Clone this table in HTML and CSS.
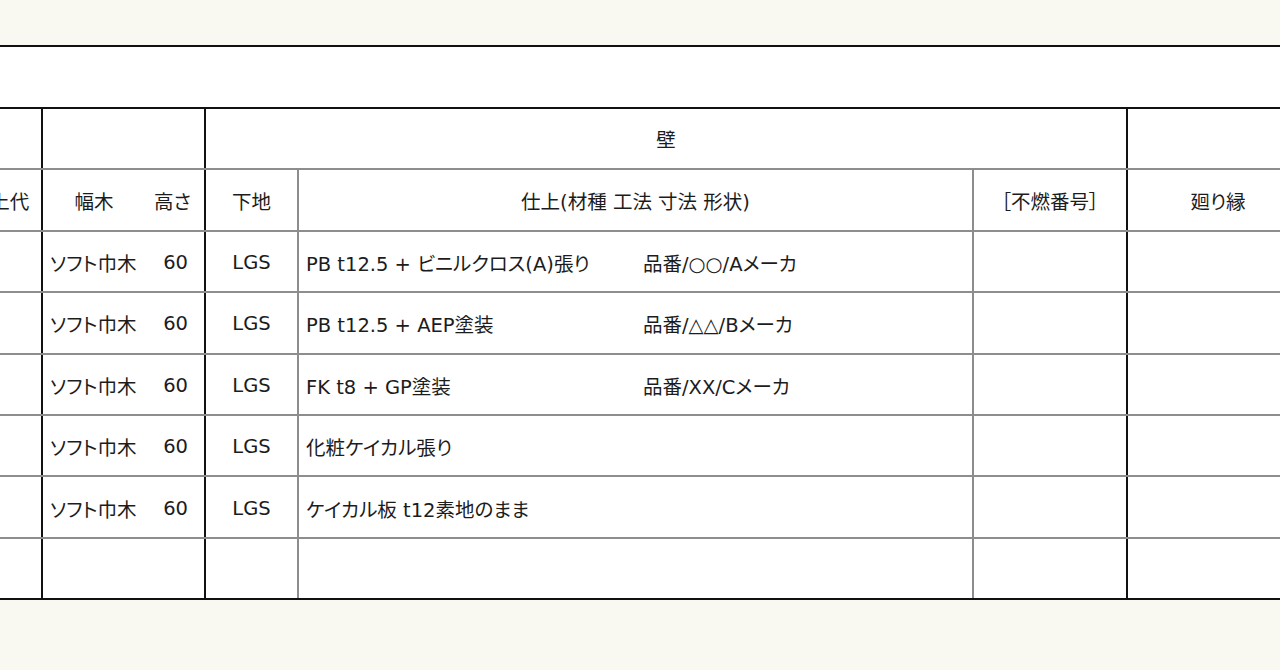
FILE: index.html
```html
<!DOCTYPE html>
<html lang="ja">
<head>
<meta charset="utf-8">
<title>仕上表</title>
<link rel="stylesheet" href="styles.css">
</head>
<body>
<div class="sheet">
  <div class="band"></div>
  <table class="schedule">
    <colgroup>
      <col class="c-allow">
      <col class="c-base">
      <col class="c-height">
      <col class="c-sub">
      <col class="c-finish">
      <col class="c-fire">
      <col class="c-cornice">
    </colgroup>
    <thead>
      <tr class="h1">
        <th class="thick-r"></th>
        <th colspan="2" class="thick-r"></th>
        <th colspan="3" class="thick-r">壁</th>
        <th></th>
      </tr>
      <tr class="h2">
        <th class="thick-r">仕上代</th>
        <th class="join-r">幅木</th>
        <th class="thick-r hgt">高さ</th>
        <th>下地</th>
        <th>仕上(材種 工法 寸法 形状)</th>
        <th class="thick-r">［不燃番号］</th>
        <th>廻り縁</th>
      </tr>
    </thead>
    <tbody>
      <tr>
        <td class="thick-r"></td>
        <td class="join-r base">ソフト巾木</td>
        <td class="thick-r num">60</td>
        <td class="sub">LGS</td>
        <td class="finish"><span class="spec">PB t12.5 + ビニルクロス(A)張り</span><span>品番/○○/Aメーカ</span></td>
        <td class="thick-r"></td>
        <td></td>
      </tr>
      <tr>
        <td class="thick-r"></td>
        <td class="join-r base">ソフト巾木</td>
        <td class="thick-r num">60</td>
        <td class="sub">LGS</td>
        <td class="finish"><span class="spec">PB t12.5 + AEP塗装</span><span>品番/△△/Bメーカ</span></td>
        <td class="thick-r"></td>
        <td></td>
      </tr>
      <tr>
        <td class="thick-r"></td>
        <td class="join-r base">ソフト巾木</td>
        <td class="thick-r num">60</td>
        <td class="sub">LGS</td>
        <td class="finish"><span class="spec">FK t8 + GP塗装</span><span>品番/XX/Cメーカ</span></td>
        <td class="thick-r"></td>
        <td></td>
      </tr>
      <tr>
        <td class="thick-r"></td>
        <td class="join-r base">ソフト巾木</td>
        <td class="thick-r num">60</td>
        <td class="sub">LGS</td>
        <td class="finish"><span class="spec">化粧ケイカル張り</span></td>
        <td class="thick-r"></td>
        <td></td>
      </tr>
      <tr>
        <td class="thick-r"></td>
        <td class="join-r base">ソフト巾木</td>
        <td class="thick-r num">60</td>
        <td class="sub">LGS</td>
        <td class="finish"><span class="spec">ケイカル板 t12素地のまま</span></td>
        <td class="thick-r"></td>
        <td></td>
      </tr>
      <tr class="last">
        <td class="thick-r"></td>
        <td class="join-r base"></td>
        <td class="thick-r num"></td>
        <td class="sub"></td>
        <td class="finish"></td>
        <td class="thick-r"></td>
        <td></td>
      </tr>
    </tbody>
  </table>
</div>
</body>
</html>
```

FILE: styles.css
```css
html, body {
  margin: 0;
  padding: 0;
}

body {
  background: #f9f8f1;
  overflow: hidden;
  width: 1280px;
  height: 670px;
  font-family: "DejaVu Sans", "Noto Sans CJK JP", sans-serif;
  font-size: 19.5px;
  font-feature-settings: "palt";
  color: #1c1c1c;
}

.sheet {
  margin-top: 45px;
  background: #ffffff;
  border-top: 2px solid #111111;
  overflow: hidden;
}

.band {
  height: 60px;
}

.schedule {
  border-collapse: collapse;
  table-layout: fixed;
  width: 1351px;
  margin-left: -43px;
}

.c-allow { width: 84px; }
.c-base { width: 103px; }
.c-height { width: 60px; }
.c-sub { width: 93px; }
.c-finish { width: 675px; }
.c-fire { width: 154px; }
.c-cornice { width: 182px; }

.schedule th,
.schedule td {
  border: 2px solid #8d8d8d;
  height: 59.4px;
  padding: 0;
  font-weight: normal;
  white-space: nowrap;
  vertical-align: middle;
}

.schedule td {
  height: 57.4px;
  padding-top: 2px;
}

.schedule th {
  text-align: center;
}

.schedule .h1 th {
  border-top: 2px solid #111111;
}

.schedule .thick-r {
  border-right: 2px solid #111111;
}

.schedule .join-r {
  border-right: hidden;
}

.schedule .last td {
  border-bottom: 2px solid #111111;
}

.schedule .h2 .hgt {
  padding-right: 4px;
}

.schedule .base {
  text-align: left;
  padding-left: 7px;
}

.schedule .num {
  text-align: right;
  padding-right: 16px;
}

.schedule .sub {
  text-align: center;
}

.schedule .finish {
  text-align: left;
  padding-left: 7px;
}

.spec {
  display: inline-block;
  width: 337px;
}
```
